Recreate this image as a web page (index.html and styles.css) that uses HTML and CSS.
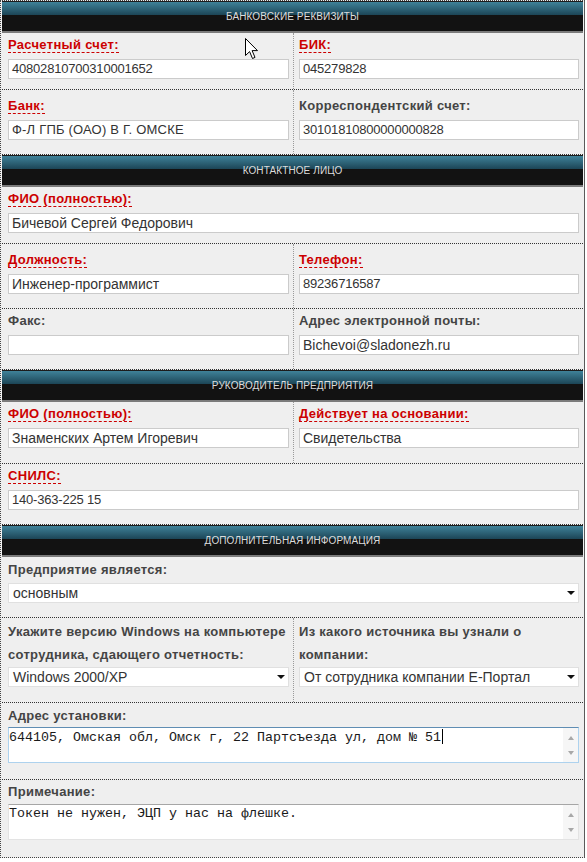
FILE: index.html
```html
<!DOCTYPE html>
<html lang="ru">
<head>
<meta charset="utf-8">
<title>Анкета</title>
<link rel="stylesheet" href="styles.css">
</head>
<body>
<div class="form">
  <div class="head">Банковские реквизиты</div>
  <div class="row two tight">
    <div class="cell">
      <div class="lbl"><span class="req">Расчетный счет:</span></div>
      <div class="inp num">40802810700310001652</div>
    </div>
    <div class="cell">
      <div class="lbl"><span class="req">БИК:</span></div>
      <div class="inp num">045279828</div>
    </div>
  </div>
  <div class="row two pad4">
    <div class="cell">
      <div class="lbl"><span class="req">Банк:</span></div>
      <div class="inp caps">Ф-Л ГПБ (ОАО) В Г. ОМСКЕ</div>
    </div>
    <div class="cell">
      <div class="lbl">Корреспондентский счет:</div>
      <div class="inp num">30101810800000000828</div>
    </div>
  </div>

  <div class="head">Контактное лицо</div>
  <div class="row one tight">
    <div class="cell">
      <div class="lbl"><span class="req">ФИО (полностью):</span></div>
      <div class="inp">Бичевой Сергей Федорович</div>
    </div>
  </div>
  <div class="row two pad4">
    <div class="cell">
      <div class="lbl"><span class="req">Должность:</span></div>
      <div class="inp">Инженер-программист</div>
    </div>
    <div class="cell">
      <div class="lbl"><span class="req">Телефон:</span></div>
      <div class="inp num">89236716587</div>
    </div>
  </div>
  <div class="row two">
    <div class="cell">
      <div class="lbl">Факс:</div>
      <div class="inp"></div>
    </div>
    <div class="cell">
      <div class="lbl">Адрес электронной почты:</div>
      <div class="inp">Bichevoi@sladonezh.ru</div>
    </div>
  </div>

  <div class="head">Руководитель предприятия</div>
  <div class="row two pb15">
    <div class="cell">
      <div class="lbl"><span class="req">ФИО (полностью):</span></div>
      <div class="inp">Знаменских Артем Игоревич</div>
    </div>
    <div class="cell">
      <div class="lbl"><span class="req">Действует на основании:</span></div>
      <div class="inp">Свидетельства</div>
    </div>
  </div>
  <div class="row one">
    <div class="cell">
      <div class="lbl"><span class="req">СНИЛС:</span></div>
      <div class="inp num">140-363-225 15</div>
    </div>
  </div>

  <div class="head">Дополнительная информация</div>
  <div class="row one s1">
    <div class="cell">
      <div class="lbl">Предприятие является:</div>
      <div class="sel"><span>основным</span><i class="arrow"></i></div>
    </div>
  </div>
  <div class="row two s2">
    <div class="cell">
      <div class="lbl">Укажите версию Windows на компьютере<br>сотрудника, сдающего отчетность:</div>
      <div class="sel"><span>Windows 2000/XP</span><i class="arrow"></i></div>
    </div>
    <div class="cell">
      <div class="lbl">Из какого источника вы узнали о<br>компании:</div>
      <div class="sel"><span>От сотрудника компании Е-Портал</span><i class="arrow"></i></div>
    </div>
  </div>
  <div class="row one s3">
    <div class="cell">
      <div class="lbl">Адрес установки:</div>
      <div class="ta focus">
        <div class="ta-text">644105, Омская обл, Омск г, 22 Партсъезда ул, дом № 51<span class="caret"></span></div>
        <div class="ta-bar"><i class="up"></i><i class="down"></i></div>
      </div>
    </div>
  </div>
  <div class="row one s4 last">
    <div class="cell">
      <div class="lbl">Примечание:</div>
      <div class="ta">
        <div class="ta-text">Токен не нужен, ЭЦП у нас на флешке.</div>
        <div class="ta-bar"><i class="up"></i><i class="down"></i></div>
      </div>
    </div>
  </div>

  <svg class="pointer" width="14" height="22" viewBox="0 0 14 22">
    <path d="M0.5 0.5 L0.5 17.5 L4.6 13.6 L7.5 20.5 L10 19.4 L7.1 12.6 L12.5 12.6 Z" fill="#fff" stroke="#000" stroke-width="1" stroke-linejoin="miter"/>
  </svg>
</div>
</body>
</html>
```

FILE: styles.css
```css
body {
  margin: 0;
  background: #ffffff;
  font-family: "Liberation Sans", Arial, sans-serif;
}

.form {
  position: relative;
  width: 581px;
  padding: 0 1px;
  background: #efefef;
  border-left: 1px dotted #444;
  border-top: 1px dotted #444;
  border-bottom: 1px dotted #444;
  border-right: 1px solid #5a5a5a;
}

.head {
  height: 29px;
  border-top: 1px solid #1c1c1c;
  border-bottom: 2px solid #7b7b7b;
  background: linear-gradient(to bottom, #3f8299 0, #1c4556 13px, #121212 13px, #121212 100%);
  color: #dcdcdc;
  font-size: 10px;
  letter-spacing: 0.1px;
  text-transform: uppercase;
  display: flex;
  align-items: center;
  justify-content: center;
}

.row {
  display: grid;
  border-bottom: 1px dotted #333;
}
.row.two { grid-template-columns: 291px 1fr; }
.row.one { grid-template-columns: 1fr; }
.row.last { border-bottom: none; }

.cell {
  padding: 0 4px 14px 6px;
}
.row.two .cell + .cell {
  border-left: 1px dotted #9a9a9a;
  padding-left: 5px;
}

.row.tight .cell { padding-bottom: 10px; }
.row.pad4 .cell { padding-top: 4px; }
.row.pb15 .cell { padding-bottom: 15px; }

.lbl {
  font-size: 13px;
  line-height: 23px;
  font-weight: bold;
  letter-spacing: 0.3px;
  color: #444;
  white-space: nowrap;
}
.req {
  color: #cc0000;
  border-bottom: 1px dashed #cc0000;
}

.inp {
  box-sizing: border-box;
  height: 20px;
  margin-top: 3px;
  border: 1px solid #cbcbcb;
  background: #fff;
  padding: 0 3px;
  font-size: 14px;
  line-height: 18px;
  color: #333;
  white-space: nowrap;
  overflow: hidden;
}
.inp.num {
  font-size: 13px;
  letter-spacing: -0.2px;
}
.inp.caps {
  font-size: 13px;
  letter-spacing: 0.2px;
}

.sel {
  box-sizing: border-box;
  height: 20px;
  margin-top: 2px;
  border: 1px solid #e0e0e0;
  background: #fff;
  padding: 0 3px 0 4px;
  font-size: 14px;
  color: #333;
  display: flex;
  align-items: center;
  justify-content: space-between;
  white-space: nowrap;
}
.arrow {
  width: 0;
  height: 0;
  border-left: 4px solid transparent;
  border-right: 4px solid transparent;
  border-top: 4px solid #111;
}

.row.s1 .cell { padding-top: 1px; }
.row.s2 .cell { padding-top: 2px; padding-bottom: 15px; }
.row.s2 .sel { margin-top: 1px; }
.row.s3 .cell { padding-top: 1px; padding-bottom: 16px; }
.row.s4 .cell { padding-top: 0; padding-bottom: 17px; }
.row.s4 .ta { margin-top: 1px; }

.ta {
  box-sizing: border-box;
  height: 36px;
  display: flex;
  background: #fff;
  border: 1px solid #e3e3e3;
  border-top-color: #a6a6a6;
}
.ta.focus {
  border-color: #add2ee;
  border-top-color: #5f8db3;
}
.ta-text {
  flex: 1;
  font-family: "Liberation Mono", "Courier New", monospace;
  font-size: 13.33px;
  line-height: 16px;
  padding: 1px 0 1px 0;
  color: #1a1a1a;
  white-space: pre;
}
.caret {
  display: inline-block;
  width: 1px;
  height: 15px;
  margin-left: 1px;
  background: #000;
  vertical-align: -3px;
}
.ta-bar {
  width: 15px;
  background: #f6f6f6;
  display: flex;
  flex-direction: column;
  align-items: center;
  justify-content: space-around;
  padding: 2px 0;
}
.up, .down {
  width: 0;
  height: 0;
  border-left: 3.5px solid transparent;
  border-right: 3.5px solid transparent;
}
.up { border-bottom: 4px solid #a8a8a8; }
.down { border-top: 4px solid #a8a8a8; }

.pointer {
  position: absolute;
  left: 244px;
  top: 37px;
}
```
